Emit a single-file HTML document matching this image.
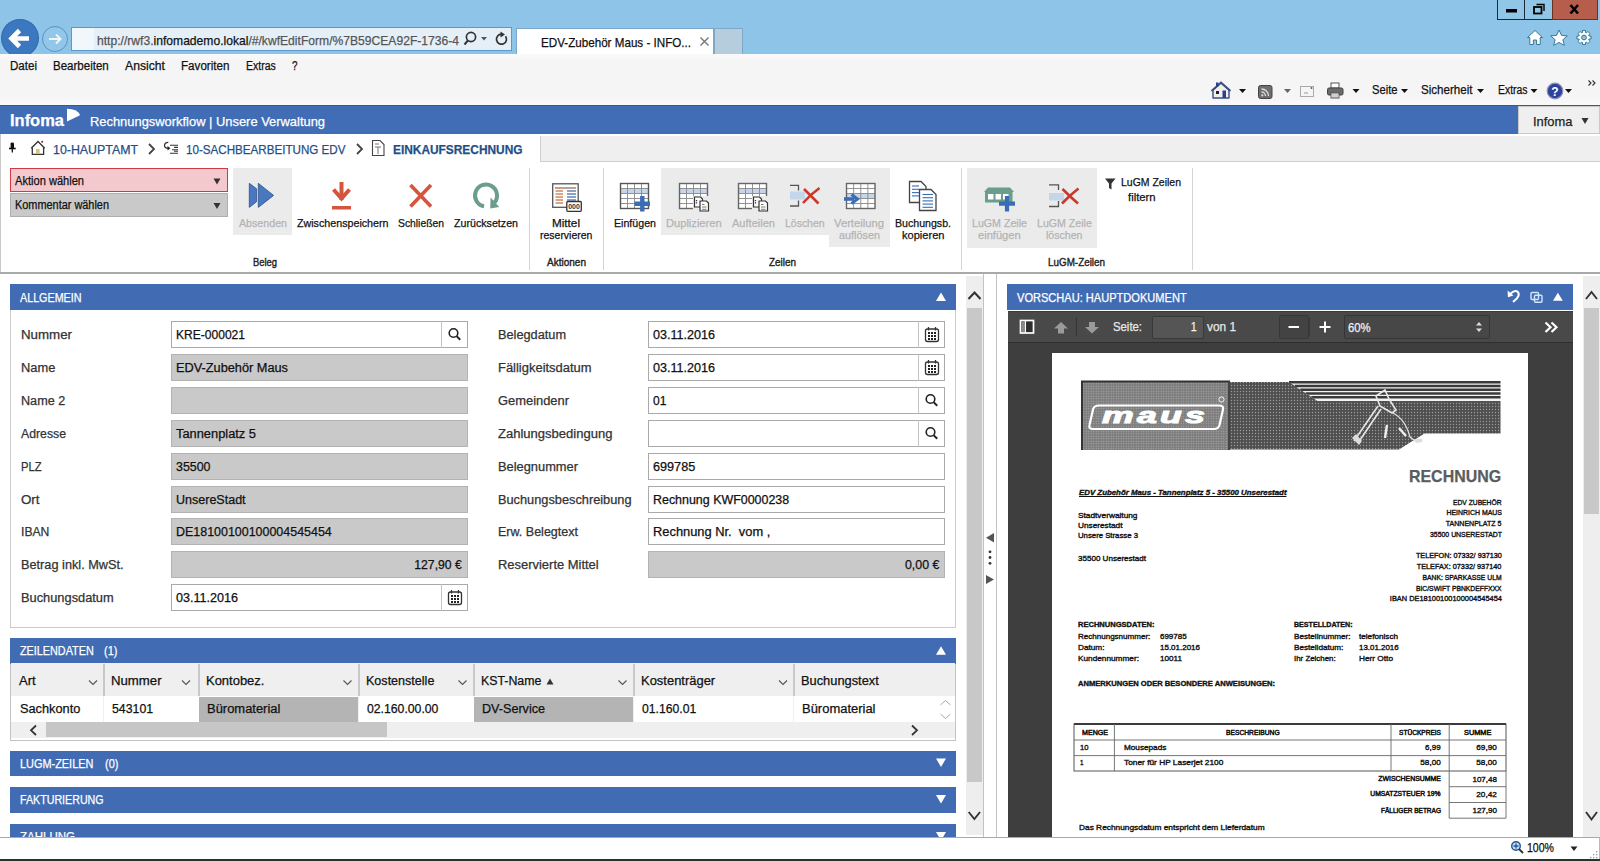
<!DOCTYPE html>
<html><head><meta charset="utf-8">
<style>
*{margin:0;padding:0;box-sizing:border-box}
html,body{width:1600px;height:861px;overflow:hidden;background:#fff;font-family:"Liberation Sans",sans-serif;color:#222;position:relative}
.a{position:absolute}
.t{position:absolute;white-space:nowrap;line-height:1;-webkit-text-stroke:0.25px currentColor}
svg{position:absolute;overflow:visible}
svg text{font-family:"Liberation Sans",sans-serif}
</style></head><body>
<div class="a" style="left:0px;top:0px;width:1600px;height:54px;background:#8dc4e7;"></div>
<div class="a" style="left:2px;top:20px;width:36px;height:36px;background:#3b78c0;border-radius:50%;box-shadow:0 0 0 1px #3169ad;"></div>
<svg style="left:0px;top:0px;" width="80" height="60" viewBox="0 0 80 60"><path d="M12.5 38.5 H29 M19.5 30.5 L11.5 38.5 L19.5 46.5" stroke="#fff" stroke-width="4.6" fill="none"></path><circle cx="55" cy="39" r="12.5" stroke="#5a93c4" stroke-width="1" fill="#92c7e9"></circle><path d="M49 39 H60.5 M56 34.5 L60.5 39 L56 43.5" stroke="#eef6fc" stroke-width="2" fill="none"></path></svg>
<div class="a" style="left:71px;top:27px;width:441px;height:24px;background:#e4eff8;border:1px solid #5f98c8;"></div>
<div class="a" style="left:72px;top:28px;width:22px;height:22px;background:#f2f7fb;"></div>
<div class="t" style="left: 96.5px; top: 33.5px; font-size: 13px; color: rgb(85, 85, 85); transform-origin: 0px 0px; transform: scaleX(0.9312);">http://rwf3.<span style="color:#111">infomademo.lokal</span>/#/kwfEditForm/%7B59CEA92F-1736-4</div>
<svg style="left:460px;top:28px;" width="52" height="24" viewBox="0 0 52 24"><circle cx="11" cy="9" r="4.6" stroke="#333" stroke-width="1.7" fill="none"></circle><path d="M8 12.3 L4.5 16.5" stroke="#333" stroke-width="2"></path><path d="M21 9 L27 9 L24 12.5 Z" fill="#555"></path><path d="M45.5 8.2 A5 5 0 1 1 41.5 6.2" stroke="#333" stroke-width="1.7" fill="none"></path><path d="M40.5 3.5 L45 6.5 L40.5 9.5 Z" fill="#333"></path></svg>
<div class="a" style="left:516px;top:28px;width:198px;height:27px;background:#fff;border:1px solid #78a6cc;border-bottom:none;"></div>
<div class="t" style="left: 541px; top: 36px; font-size: 13px; color: rgb(17, 17, 17); transform-origin: 0px 0px; transform: scaleX(0.8949);">EDV-Zubehör Maus - INFO...</div>
<svg style="left:698px;top:31.5px;" width="16" height="20" viewBox="0 0 16 20"><path d="M2.5 5.5 L10.5 13.5 M10.5 5.5 L2.5 13.5" stroke="#777" stroke-width="1.4"></path></svg>
<div class="a" style="left:714px;top:28px;width:29px;height:27px;background:#b5cddd;border:1px solid #7fa8c6;"></div>
<div class="a" style="left:1497px;top:-1px;width:28px;height:21px;background:#91c6e7;border:1px solid #1d2b38;"></div>
<div class="a" style="left:1524px;top:-1px;width:29px;height:21px;background:#91c6e7;border:1px solid #1d2b38;"></div>
<div class="a" style="left:1552px;top:-1px;width:46px;height:21px;background:#b65d4c;border:1px solid #6a3024;"></div>
<svg style="left:1490px;top:0px;" width="110" height="24" viewBox="0 0 110 24"><rect x="16" y="9" width="11" height="3.5" fill="#000"></rect><rect x="44" y="7" width="7.5" height="6.5" stroke="#000" stroke-width="1.8" fill="none"></rect><path d="M46.5 4.5 H54 V11" stroke="#000" stroke-width="1.4" fill="none"></path><path d="M80.5 5 L88 13.5 M88 5 L80.5 13.5" stroke="#000" stroke-width="2.6"></path></svg>
<svg style="left:1520px;top:26px;" width="80" height="24" viewBox="0 0 80 24"><path d="M15 4.5 L7.5 11.5 H9.8 V18.5 H13.4 V14 H16.6 V18.5 H20.2 V11.5 H22.5 Z" fill="#fff" stroke="#2b6d8c" stroke-width="0.9" stroke-linejoin="round"></path><path d="M39 4 L41.5 9.4 L47.3 9.9 L42.9 13.7 L44.3 19.4 L39 16.4 L33.7 19.4 L35.1 13.7 L30.7 9.9 L36.5 9.4 Z" fill="#fff" stroke="#2b6d8c" stroke-width="0.9" stroke-linejoin="round"></path><path d="M69.09 10.04 L71.04 10.00 L71.04 13.00 L69.09 12.96 L68.64 14.07 L70.04 15.42 L67.92 17.54 L66.57 16.14 L65.46 16.59 L65.50 18.54 L62.50 18.54 L62.54 16.59 L61.43 16.14 L60.08 17.54 L57.96 15.42 L59.36 14.07 L58.91 12.96 L56.96 13.00 L56.96 10.00 L58.91 10.04 L59.36 8.93 L57.96 7.58 L60.08 5.46 L61.43 6.86 L62.54 6.41 L62.50 4.46 L65.50 4.46 L65.46 6.41 L66.57 6.86 L67.92 5.46 L70.04 7.58 L68.64 8.93 Z" fill="#fff" stroke="#2b6d8c" stroke-width="0.9" stroke-linejoin="round"></path><circle cx="64" cy="11.5" r="2.4" fill="#8dc4e7" stroke="#2b6d8c" stroke-width="0.9"></circle></svg>
<div class="a" style="left:0px;top:54px;width:1600px;height:51px;background:linear-gradient(#fbfafa 0px,#f6f5f5 6px,#f6f5f5 44px,#fbfafa 51px);"></div>
<div class="t" style="left: 10px; top: 59.62px; font-size: 12.5px; color: rgb(17, 17, 17); transform-origin: 0px 0px; transform: scaleX(0.9251);">Datei</div>
<div class="t" style="left: 53px; top: 59.62px; font-size: 12.5px; color: rgb(17, 17, 17); transform-origin: 0px 0px; transform: scaleX(0.922);">Bearbeiten</div>
<div class="t" style="left: 125px; top: 59.62px; font-size: 12.5px; color: rgb(17, 17, 17); transform-origin: 0px 0px; transform: scaleX(0.9756);">Ansicht</div>
<div class="t" style="left: 181px; top: 59.62px; font-size: 12.5px; color: rgb(17, 17, 17); transform-origin: 0px 0px; transform: scaleX(0.9307);">Favoriten</div>
<div class="t" style="left: 246px; top: 59.62px; font-size: 12.5px; color: rgb(17, 17, 17); transform-origin: 0px 0px; transform: scaleX(0.8395);">Extras</div>
<div class="t" style="left: 292px; top: 59.62px; font-size: 12.5px; color: rgb(17, 17, 17); transform-origin: 0px 0px; transform: scaleX(0.791);">?</div>
<svg style="left:1205px;top:78px;" width="395" height="26" viewBox="0 0 395 26"><path d="M16 5 L8 12 V20 H24 V12 Z" fill="#f4f0e6" stroke="#3b4f8c" stroke-width="1.4" stroke-linejoin="round"></path><path d="M6.5 13 L16 4.5 L25.5 13" stroke="#3b4f8c" stroke-width="2" fill="none"></path><rect x="11" y="4.5" width="2.4" height="4" fill="#2b3f8a"></rect><rect x="11" y="13" width="3" height="3" fill="#223"></rect><rect x="17.5" y="12.5" width="3.5" height="7.5" fill="#2a3f9a"></rect><path d="M34 11 L41 11 L37.5 15 Z" fill="#111"></path><rect x="53.5" y="7.5" width="13.5" height="13" rx="2" fill="#6e6e6e" stroke="#444" stroke-width="1"></rect><path d="M56.5 11 A7 7 0 0 1 63.5 18 M56.5 14 A4 4 0 0 1 60.5 18" stroke="#ddd" stroke-width="1.3" fill="none"></path><circle cx="57.3" cy="17.3" r="1.1" fill="#ddd"></circle><path d="M79 11 L86 11 L82.5 15 Z" fill="#666"></path><rect x="95.5" y="8.5" width="13" height="10" fill="#f5f5f5" stroke="#aaa" stroke-width="1"></rect><path d="M99 15 H103" stroke="#999" stroke-width="1"></path><circle cx="106.5" cy="10" r="1" fill="#c33"></circle><rect x="126" y="5" width="8" height="5" fill="#fff" stroke="#555" stroke-width="1"></rect><rect x="122.5" y="10" width="15.5" height="7" rx="1.5" fill="#6a6a6a" stroke="#444" stroke-width="1"></rect><rect x="126" y="15" width="8" height="5" fill="#fff" stroke="#555" stroke-width="1"></rect><path d="M127 17 H133 M127 19 H133" stroke="#777" stroke-width="0.7"></path><path d="M147.5 11 L154.5 11 L151 15 Z" fill="#111"></path><path d="M196 11 L203 11 L199.5 15 Z" fill="#111"></path><path d="M272 11 L279 11 L275.5 15 Z" fill="#111"></path><path d="M325.5 11 L332.5 11 L329 15 Z" fill="#111"></path><circle cx="350" cy="13" r="7.8" fill="#2e429c" stroke="#8a96b8" stroke-width="1.2"></circle><text x="350" y="17.6" font-family="Liberation Sans" font-weight="bold" font-size="12" fill="#fff" text-anchor="middle">?</text><path d="M360 11 L367 11 L363.5 15 Z" fill="#111"></path><path d="M383.5 2.5 L386 5 L383.5 7.5 M387.5 2.5 L390 5 L387.5 7.5" stroke="#333" stroke-width="1.1" fill="none"></path></svg>
<div class="t" style="left: 1372px; top: 84.02px; font-size: 12.5px; color: rgb(17, 17, 17); transform-origin: 0px 0px; transform: scaleX(0.8947);">Seite</div>
<div class="t" style="left: 1421px; top: 84.02px; font-size: 12.5px; color: rgb(17, 17, 17); transform-origin: 0px 0px; transform: scaleX(0.9264);">Sicherheit</div>
<div class="t" style="left: 1497.5px; top: 84.02px; font-size: 12.5px; color: rgb(17, 17, 17); transform-origin: 0px 0px; transform: scaleX(0.8325);">Extras</div>
<div class="a" style="left:0px;top:105px;width:1600px;height:29px;background:#406db5;"></div>
<div class="a" style="left:0px;top:105px;width:1600px;height:1px;background:#30589a;"></div>
<div class="t" style="left: 10px; top: 112.41px; font-size: 17px; color: rgb(255, 255, 255); font-weight: bold; transform-origin: 0px 0px; transform: scaleX(0.9689);">Infoma</div>
<svg style="left:60px;top:104px;" width="30" height="22" viewBox="0 0 30 22"><path d="M7 4.7 Q18 5 20 11.25 L7 17.5 Z" fill="#fff"></path></svg>
<div class="t" style="left: 90px; top: 115.2px; font-size: 13px; color: rgb(255, 255, 255); transform-origin: 0px 0px; transform: scaleX(0.9925);">Rechnungsworkflow | Unsere Verwaltung</div>
<div class="a" style="left:1518px;top:106px;width:82px;height:28px;background:#efefef;border:1px solid #c9c9c9;"></div>
<div class="t" style="left: 1533px; top: 114.5px; font-size: 13px; color: rgb(34, 34, 34); transform-origin: 0px 0px; transform: scaleX(0.9937);">Infoma</div>
<svg style="left:1578px;top:113px;" width="14" height="14" viewBox="0 0 14 14"><path d="M3.5 5 L10.5 5 L7 11 Z" fill="#333"></path></svg>
<div class="a" style="left:540px;top:136px;width:1060px;height:26px;background:#efefef;border-left:1px solid #cfcfcf;border-bottom:1px solid #cfcfcf;"></div>
<div class="a" style="left:0px;top:134px;width:1px;height:140px;background:#c8c8c8;"></div>
<svg style="left:0px;top:134px;" width="540" height="30" viewBox="0 0 540 30"><path d="M10.6 14 V9.5 Q10.6 8.6 12.3 8.6 Q14 8.6 14 9.5 V14 Z" fill="#111"></path><path d="M9 14.5 H15.7" stroke="#111" stroke-width="1.6"></path><path d="M12.3 14.5 V18.5" stroke="#111" stroke-width="1.3"></path><path d="M31.2 14.3 L38 7.5 L44.7 14.3" stroke="#333" stroke-width="1.3" fill="none"></path><path d="M32.3 13.5 V20.4 H43.6 V13.5" stroke="#333" stroke-width="1.3" fill="none"></path><rect x="36" y="15" width="3.6" height="5" fill="#d9c27a"></rect><circle cx="42.2" cy="7.8" r="1" fill="#8a1a2a"></circle><path d="M149 10 L154 15 L149 20" stroke="#444" stroke-width="1.8" fill="none"></path><path d="M168.3 8.3 Q164.5 8.3 164.5 11.5 Q164.5 14.3 168.5 14.3" stroke="#333" stroke-width="1.3" fill="none"></path><path d="M167.5 12 L170.5 14.3 L167.5 16.5 Z" fill="#223"></path><path d="M170 11.3 H178 M174 13.4 H178 M172 15.7 H178 M174 17.3 H178 M170 19.3 H178" stroke="#333" stroke-width="1.1"></path><path d="M357 10 L362 15 L357 20" stroke="#444" stroke-width="1.8" fill="none"></path><path d="M372.5 6.5 H380 L384 10.5 V21.5 H372.5 Z" fill="#fff" stroke="#444" stroke-width="1.1"></path><path d="M375 10 H379 M375 13 H381 M378 13 V20" stroke="#666" stroke-width="0.9"></path></svg>
<div class="t" style="left: 52.5px; top: 143px; font-size: 13px; color: rgb(30, 80, 136); transform-origin: 0px 0px; transform: scaleX(0.9515);">10-HAUPTAMT</div>
<div class="t" style="left: 186px; top: 143px; font-size: 13px; color: rgb(30, 80, 136); transform-origin: 0px 0px; transform: scaleX(0.8939);">10-SACHBEARBEITUNG EDV</div>
<div class="t" style="left: 392.5px; top: 143px; font-size: 13px; color: rgb(30, 80, 136); font-weight: bold; transform-origin: 0px 0px; transform: scaleX(0.9148);">EINKAUFSRECHNUNG</div>
<div class="a" style="left:0px;top:272px;width:1600px;height:2px;background:#a9a9a9;height:1.5px;"></div>
<div class="a" style="left:529px;top:168px;width:1px;height:102px;background:#d4d4d4;"></div>
<div class="a" style="left:603px;top:168px;width:1px;height:102px;background:#d4d4d4;"></div>
<div class="a" style="left:961px;top:168px;width:1px;height:102px;background:#d4d4d4;"></div>
<div class="a" style="left:1192px;top:168px;width:1px;height:102px;background:#d4d4d4;"></div>
<div class="a" style="left:10px;top:168px;width:218px;height:24px;background:#f3c9cd;border:1px solid #d03a44;"></div>
<div class="t" style="left: 14.5px; top: 175.04px; font-size: 12px; color: rgb(17, 17, 17); transform-origin: 0px 0px; transform: scaleX(0.9235);">Aktion wählen</div>
<div class="a" style="left:10px;top:193px;width:218px;height:24px;background:#c9c9c9;border:1px solid #aeaeae;"></div>
<div class="t" style="left: 14.5px; top: 199.04px; font-size: 12px; color: rgb(17, 17, 17); transform-origin: 0px 0px; transform: scaleX(0.9092);">Kommentar wählen</div>
<svg style="left:205px;top:170px;" width="25" height="45" viewBox="0 0 25 45"><path d="M8.5 8.5 L15.5 8.5 L12 14.5 Z" fill="#333"></path><path d="M8.5 33 L15.5 33 L12 39 Z" fill="#333"></path></svg>
<div class="a" style="left:233px;top:168px;width:59px;height:67px;background:#ebebeb;"></div>
<div class="a" style="left:661px;top:168px;width:229px;height:67px;background:#ebebeb;"></div>
<div class="a" style="left:829px;top:168px;width:61px;height:79px;background:#ebebeb;"></div>
<div class="a" style="left:967px;top:168px;width:130px;height:80px;background:#ebebeb;"></div>
<svg style="left:0px;top:0px;" width="1600" height="280" viewBox="0 0 1600 280"><path d="M249.3 183.3 L256.6 188.8 V201.7 L249.3 207.4 Z" fill="#4a78c0" stroke="#2c4f8a" stroke-width="0.8" stroke-linejoin="round"></path><path d="M258.3 183.3 L273.6 195.4 L258.3 207.4 Z" fill="#4a78c0" stroke="#2c4f8a" stroke-width="0.8" stroke-linejoin="round"></path><path d="M341.5 182 V200" stroke="#d2553c" stroke-width="4"></path><path d="M333.5 189.5 L341.5 198.5 L349.5 189.5" stroke="#d2553c" stroke-width="4" fill="none"></path><rect x="332" y="206" width="19" height="3.5" fill="#d2553c"></rect><path d="M410.5 185 L431 206.5 M431 185 L410.5 206.5" stroke="#d6553f" stroke-width="3.6"></path><path d="M484.1 206.4 A11 11 0 1 1 494.4 202.7" stroke="#6a9e8b" stroke-width="4" fill="none"></path><path d="M490.6 197.5 L490.2 208.5 L499.2 207 Z" fill="#6a9e8b"></path><rect x="552.7" y="183.8" width="25.5" height="23.5" fill="#fff" stroke="#555" stroke-width="1.3"></rect><path d="M555 188 H576" stroke="#b08a7a" stroke-width="1.6"></path><path d="M555.5 191 H563" stroke="#d0906a" stroke-width="1.6"></path><path d="M567 191 H576" stroke="#6a8cc0" stroke-width="1.6"></path><path d="M555.5 194 H563" stroke="#d0906a" stroke-width="1.6"></path><path d="M567 194 H576" stroke="#6a8cc0" stroke-width="1.6"></path><path d="M555.5 197 H563" stroke="#d0906a" stroke-width="1.6"></path><path d="M567 197 H576" stroke="#6a8cc0" stroke-width="1.6"></path><path d="M555.5 200 H563" stroke="#d0906a" stroke-width="1.6"></path><path d="M567 200 H576" stroke="#6a8cc0" stroke-width="1.6"></path><path d="M555.5 203 H563" stroke="#d0906a" stroke-width="1.6"></path><path d="M567 203 H576" stroke="#6a8cc0" stroke-width="1.6"></path><rect x="566.8" y="201.5" width="14.5" height="9.8" rx="1" fill="#fff" stroke="#333" stroke-width="1.3"></rect><text x="574" y="209.3" font-size="7" font-weight="bold" fill="#333" text-anchor="middle">000</text><rect x="620.5" y="183.5" width="28" height="25" fill="#fff"></rect><rect x="620.5" y="188.5" width="28" height="5.0" fill="#c5d5ea"></rect><path d="M620.5 188.50 H648.5" stroke="#888" stroke-width="0.9"></path><path d="M620.5 193.50 H648.5" stroke="#888" stroke-width="0.9"></path><path d="M620.5 198.50 H648.5" stroke="#888" stroke-width="0.9"></path><path d="M620.5 203.50 H648.5" stroke="#888" stroke-width="0.9"></path><path d="M627.50 183.5 V208.5" stroke="#888" stroke-width="0.9"></path><path d="M634.50 183.5 V208.5" stroke="#888" stroke-width="0.9"></path><path d="M641.50 183.5 V208.5" stroke="#888" stroke-width="0.9"></path><rect x="620.5" y="183.5" width="28" height="25" fill="none" stroke="#555" stroke-width="1.4"></rect><path d="M634.5 203.8 H650 M642.3 196 V211.5" stroke="#3a6db5" stroke-width="4.4"></path><rect x="679.5" y="183.5" width="28" height="25" fill="#fff"></rect><rect x="679.5" y="188.5" width="28" height="5.0" fill="#c5d5ea"></rect><path d="M679.5 188.50 H707.5" stroke="#888" stroke-width="0.9"></path><path d="M679.5 193.50 H707.5" stroke="#888" stroke-width="0.9"></path><path d="M679.5 198.50 H707.5" stroke="#888" stroke-width="0.9"></path><path d="M679.5 203.50 H707.5" stroke="#888" stroke-width="0.9"></path><path d="M686.50 183.5 V208.5" stroke="#888" stroke-width="0.9"></path><path d="M693.50 183.5 V208.5" stroke="#888" stroke-width="0.9"></path><path d="M700.50 183.5 V208.5" stroke="#888" stroke-width="0.9"></path><rect x="679.5" y="183.5" width="28" height="25" fill="none" stroke="#666" stroke-width="1.4"></rect><rect x="693" y="196" width="16" height="16" fill="#ebebeb"></rect><path d="M694.5 197 H700.5 L702.5 199 V207 H694.5 Z" fill="#fff" stroke="#333" stroke-width="1.2"></path><path d="M696.5 200 V204" stroke="#333" stroke-width="1.3" stroke-dasharray="1.2 1"></path><path d="M700.0 201 H706.5 L708.5 203 V211 H700.0 Z" fill="#fff" stroke="#333" stroke-width="1.2"></path><path d="M702.0 204.5 H704.5 M702.0 207 H706.5 M702.0 209.3 H706.5" stroke="#444" stroke-width="0.7"></path><rect x="738.5" y="183.5" width="28" height="25" fill="#fff"></rect><rect x="738.5" y="188.5" width="28" height="5.0" fill="#c5d5ea"></rect><path d="M738.5 188.50 H766.5" stroke="#888" stroke-width="0.9"></path><path d="M738.5 193.50 H766.5" stroke="#888" stroke-width="0.9"></path><path d="M738.5 198.50 H766.5" stroke="#888" stroke-width="0.9"></path><path d="M738.5 203.50 H766.5" stroke="#888" stroke-width="0.9"></path><path d="M745.50 183.5 V208.5" stroke="#888" stroke-width="0.9"></path><path d="M752.50 183.5 V208.5" stroke="#888" stroke-width="0.9"></path><path d="M759.50 183.5 V208.5" stroke="#888" stroke-width="0.9"></path><rect x="738.5" y="183.5" width="28" height="25" fill="none" stroke="#666" stroke-width="1.4"></rect><rect x="752" y="196" width="17" height="16" fill="#ebebeb"></rect><path d="M753.5 197 H759.5 L761.5 199 V207 H753.5 Z" fill="#fff" stroke="#333" stroke-width="1.2"></path><path d="M755.5 200 V204" stroke="#333" stroke-width="1.3" stroke-dasharray="1.2 1"></path><path d="M759.0 201 H765.5 L767.5 203 V211 H759.0 Z" fill="#fff" stroke="#333" stroke-width="1.2"></path><path d="M761.0 204.5 H763.5 M761.0 207 H765.5 M761.0 209.3 H765.5" stroke="#444" stroke-width="0.7"></path><path d="M790 185.3 H798.5 V190.5 M798.5 200.5 V206 H790" stroke="#555" stroke-width="1.3" fill="none"></path><rect x="790" y="191.5" width="15" height="8" fill="#c5d5ea"></rect><path d="M803 203 Q811 194 819.5 188 M804 189 Q812 197 818.5 203.5" stroke="#c8382c" stroke-width="2.6" fill="none"></path><rect x="846.5" y="183.5" width="28.5" height="25" fill="#fff"></rect><rect x="846.5" y="193.5" width="28.5" height="5.0" fill="#c5d5ea"></rect><path d="M846.5 188.50 H875.0" stroke="#888" stroke-width="0.9"></path><path d="M846.5 193.50 H875.0" stroke="#888" stroke-width="0.9"></path><path d="M846.5 198.50 H875.0" stroke="#888" stroke-width="0.9"></path><path d="M846.5 203.50 H875.0" stroke="#888" stroke-width="0.9"></path><path d="M853.62 183.5 V208.5" stroke="#888" stroke-width="0.9"></path><path d="M860.75 183.5 V208.5" stroke="#888" stroke-width="0.9"></path><path d="M867.88 183.5 V208.5" stroke="#888" stroke-width="0.9"></path><rect x="846.5" y="183.5" width="28.5" height="25" fill="none" stroke="#666" stroke-width="1.4"></rect><path d="M844 199 H854" stroke="#3a6db5" stroke-width="3.6"></path><path d="M851.5 194.5 L857.5 199 L851.5 203.5" stroke="#3a6db5" stroke-width="3" fill="none"></path><path d="M909.5 181.5 H921 L926 186.5 V202.5 H909.5 Z" fill="#fff" stroke="#444" stroke-width="1.3"></path><path d="M912 186.0 H919" stroke="#3a6db5" stroke-width="1.1"></path><path d="M912 189.3 H919" stroke="#3a6db5" stroke-width="1.1"></path><path d="M912 192.6 H919" stroke="#3a6db5" stroke-width="1.1"></path><path d="M912 195.9 H919" stroke="#3a6db5" stroke-width="1.1"></path><path d="M919.5 189.5 H931 L936 194.5 V210.5 H919.5 Z" fill="#fff" stroke="#444" stroke-width="1.3"></path><path d="M922.5 194.5 H933" stroke="#3a6db5" stroke-width="1.1"></path><path d="M922.5 197.7 H933" stroke="#3a6db5" stroke-width="1.1"></path><path d="M922.5 200.9 H933" stroke="#3a6db5" stroke-width="1.1"></path><path d="M922.5 204.1 H933" stroke="#3a6db5" stroke-width="1.1"></path><path d="M922.5 207.3 H933" stroke="#3a6db5" stroke-width="1.1"></path><path d="M984 192 L988 187.5 H1010 L1014 192 Z" fill="#6a9e8a"></path><rect x="985" y="191.5" width="27.5" height="11" fill="#6a9e8a"></rect><rect x="988" y="194" width="5.5" height="5.5" fill="#fff"></rect><rect x="995.5" y="194" width="5.5" height="5.5" fill="#fff"></rect><rect x="1003" y="194" width="5.5" height="5.5" fill="#fff"></rect><path d="M999 203.6 H1015 M1007 196 V211.5" stroke="#3a6db5" stroke-width="4.2"></path><path d="M1049 184.8 H1058.5 V190 M1058.5 201 V206.5 H1049" stroke="#555" stroke-width="1.3" fill="none"></path><rect x="1049" y="193" width="15" height="7.5" fill="#c5d5ea"></rect><path d="M1062 203.5 Q1070 195 1078.5 188.5 M1062.5 189 Q1070.5 197 1078 203.5" stroke="#c8382c" stroke-width="2.6" fill="none"></path><path d="M1105 178.5 H1115.5 L1111.5 183.5 V189.5 L1109 188 V183.5 Z" fill="#333"></path></svg>
<div class="t" style="left: 238.5px; top: 218.47px; font-size: 11.5px; color: rgb(179, 179, 179); transform-origin: 0px 0px; transform: scaleX(0.9267);">Absenden</div>
<div class="t" style="left: 296.5px; top: 218.47px; font-size: 11.5px; color: rgb(17, 17, 17); transform-origin: 0px 0px; transform: scaleX(0.9295);">Zwischenspeichern</div>
<div class="t" style="left: 398px; top: 218.47px; font-size: 11.5px; color: rgb(17, 17, 17); transform-origin: 0px 0px; transform: scaleX(0.8995);">Schließen</div>
<div class="t" style="left: 454px; top: 218.47px; font-size: 11.5px; color: rgb(17, 17, 17); transform-origin: 0px 0px; transform: scaleX(0.9271);">Zurücksetzen</div>
<div class="t" style="left: 552px; top: 218.47px; font-size: 11.5px; color: rgb(17, 17, 17); transform-origin: 0px 0px; transform: scaleX(1.0188);">Mittel</div>
<div class="t" style="left: 539.6px; top: 230.27px; font-size: 11.5px; color: rgb(17, 17, 17); transform-origin: 0px 0px; transform: scaleX(0.9108);">reservieren</div>
<div class="t" style="left: 614px; top: 218.47px; font-size: 11.5px; color: rgb(17, 17, 17); transform-origin: 0px 0px; transform: scaleX(0.925);">Einfügen</div>
<div class="t" style="left: 666px; top: 218.47px; font-size: 11.5px; color: rgb(179, 179, 179); transform-origin: 0px 0px; transform: scaleX(0.9664);">Duplizieren</div>
<div class="t" style="left: 731.6px; top: 218.47px; font-size: 11.5px; color: rgb(179, 179, 179); transform-origin: 0px 0px; transform: scaleX(0.9606);">Aufteilen</div>
<div class="t" style="left: 785px; top: 218.47px; font-size: 11.5px; color: rgb(179, 179, 179); transform-origin: 0px 0px; transform: scaleX(0.9107);">Löschen</div>
<div class="t" style="left: 834px; top: 218.47px; font-size: 11.5px; color: rgb(179, 179, 179); transform-origin: 0px 0px; transform: scaleX(0.9774);">Verteilung</div>
<div class="t" style="left: 839px; top: 230.27px; font-size: 11.5px; color: rgb(179, 179, 179); transform-origin: 0px 0px; transform: scaleX(0.9429);">auflösen</div>
<div class="t" style="left: 895px; top: 218.47px; font-size: 11.5px; color: rgb(17, 17, 17); transform-origin: 0px 0px; transform: scaleX(0.9218);">Buchungsb.</div>
<div class="t" style="left: 901.5px; top: 230.27px; font-size: 11.5px; color: rgb(17, 17, 17); transform-origin: 0px 0px; transform: scaleX(0.9632);">kopieren</div>
<div class="t" style="left: 972px; top: 218.47px; font-size: 11.5px; color: rgb(179, 179, 179); transform-origin: 0px 0px; transform: scaleX(0.9253);">LuGM Zeile</div>
<div class="t" style="left: 977.6px; top: 230.27px; font-size: 11.5px; color: rgb(179, 179, 179); transform-origin: 0px 0px; transform: scaleX(0.9654);">einfügen</div>
<div class="t" style="left: 1037.4px; top: 218.47px; font-size: 11.5px; color: rgb(179, 179, 179); transform-origin: 0px 0px; transform: scaleX(0.922);">LuGM Zeile</div>
<div class="t" style="left: 1045.9px; top: 230.27px; font-size: 11.5px; color: rgb(179, 179, 179); transform-origin: 0px 0px; transform: scaleX(0.9208);">löschen</div>
<div class="t" style="left: 1121.4px; top: 176.77px; font-size: 11.5px; color: rgb(17, 17, 17); transform-origin: 0px 0px; transform: scaleX(0.9112);">LuGM Zeilen</div>
<div class="t" style="left: 1128px; top: 192.27px; font-size: 11.5px; color: rgb(17, 17, 17); transform-origin: 0px 0px; transform: scaleX(0.9813);">filtern</div>
<div class="t" style="left: 252.7px; top: 256.99px; font-size: 11px; color: rgb(34, 34, 34); -webkit-text-stroke: 0.4px rgb(34, 34, 34); transform-origin: 0px 0px; transform: scaleX(0.8529);">Beleg</div>
<div class="t" style="left: 546.6px; top: 256.99px; font-size: 11px; color: rgb(34, 34, 34); -webkit-text-stroke: 0.4px rgb(34, 34, 34); transform-origin: 0px 0px; transform: scaleX(0.9109);">Aktionen</div>
<div class="t" style="left: 768.8px; top: 256.99px; font-size: 11px; color: rgb(34, 34, 34); -webkit-text-stroke: 0.4px rgb(34, 34, 34); transform-origin: 0px 0px; transform: scaleX(0.9009);">Zeilen</div>
<div class="t" style="left: 1048px; top: 256.99px; font-size: 11px; color: rgb(34, 34, 34); -webkit-text-stroke: 0.4px rgb(34, 34, 34); transform-origin: 0px 0px; transform: scaleX(0.8965);">LuGM-Zeilen</div>
<div class="a" style="left:10px;top:284px;width:946px;height:344px;background:#fff;border:1px solid #cbcbcb;border-top:none;"></div>
<div class="a" style="left:10px;top:284px;width:946px;height:26px;background:#416cb4;"></div>
<div class="t" style="left: 20.3px; top: 291.64px; font-size: 12px; color: rgb(255, 255, 255); transform-origin: 0px 0px; transform: scaleX(0.8952);">ALLGEMEIN</div>
<div class="t" style="left: 21px; top: 329.34px; font-size: 12px; color: rgb(51, 51, 51); transform-origin: 0px 0px; transform: scaleX(1.1083);">Nummer</div>
<div class="t" style="left: 21px; top: 362.34px; font-size: 12px; color: rgb(51, 51, 51); transform-origin: 0px 0px; transform: scaleX(1.0714);">Name</div>
<div class="t" style="left: 21px; top: 395.34px; font-size: 12px; color: rgb(51, 51, 51); transform-origin: 0px 0px; transform: scaleX(1.0516);">Name 2</div>
<div class="t" style="left: 21px; top: 428.34px; font-size: 12px; color: rgb(51, 51, 51); transform-origin: 0px 0px; transform: scaleX(1.022);">Adresse</div>
<div class="t" style="left: 21px; top: 461.34px; font-size: 12px; color: rgb(51, 51, 51); transform-origin: 0px 0px; transform: scaleX(0.9312);">PLZ</div>
<div class="t" style="left: 21px; top: 494.34px; font-size: 12px; color: rgb(51, 51, 51); transform-origin: 0px 0px; transform: scaleX(1.1097);">Ort</div>
<div class="t" style="left: 21px; top: 526.34px; font-size: 12px; color: rgb(51, 51, 51); transform-origin: 0px 0px; transform: scaleX(1.0137);">IBAN</div>
<div class="t" style="left: 21px; top: 559.34px; font-size: 12px; color: rgb(51, 51, 51); transform-origin: 0px 0px; transform: scaleX(1.061);">Betrag inkl. MwSt.</div>
<div class="t" style="left: 21px; top: 592.34px; font-size: 12px; color: rgb(51, 51, 51); transform-origin: 0px 0px; transform: scaleX(1.0688);">Buchungsdatum</div>
<div class="t" style="left: 498px; top: 329.34px; font-size: 12px; color: rgb(51, 51, 51); transform-origin: 0px 0px; transform: scaleX(1.0617);">Belegdatum</div>
<div class="t" style="left: 498px; top: 362.34px; font-size: 12px; color: rgb(51, 51, 51); transform-origin: 0px 0px; transform: scaleX(1.0795);">Fälligkeitsdatum</div>
<div class="t" style="left: 498px; top: 395.34px; font-size: 12px; color: rgb(51, 51, 51); transform-origin: 0px 0px; transform: scaleX(1.075);">Gemeindenr</div>
<div class="t" style="left: 498px; top: 428.34px; font-size: 12px; color: rgb(51, 51, 51); transform-origin: 0px 0px; transform: scaleX(1.0861);">Zahlungsbedingung</div>
<div class="t" style="left: 498px; top: 461.34px; font-size: 12px; color: rgb(51, 51, 51); transform-origin: 0px 0px; transform: scaleX(1.0709);">Belegnummer</div>
<div class="t" style="left: 498px; top: 494.34px; font-size: 12px; color: rgb(51, 51, 51); transform-origin: 0px 0px; transform: scaleX(1.0643);">Buchungsbeschreibung</div>
<div class="t" style="left: 498px; top: 526.34px; font-size: 12px; color: rgb(51, 51, 51); transform-origin: 0px 0px; transform: scaleX(1.0428);">Erw. Belegtext</div>
<div class="t" style="left: 498px; top: 559.34px; font-size: 12px; color: rgb(51, 51, 51); transform-origin: 0px 0px; transform: scaleX(1.0786);">Reservierte Mittel</div>
<div class="a" style="left:171px;top:321px;width:297px;height:27px;background:#fff;border:1px solid #aaa;"></div>
<div class="a" style="left:441px;top:321px;width:1px;height:27px;background:#c4c4c4;"></div>
<div class="t" style="left: 176px; top: 329.34px; font-size: 12px; color: rgb(17, 17, 17); transform-origin: 0px 0px; transform: scaleX(1.0041);">KRE-000021</div>
<div class="a" style="left:171px;top:354px;width:297px;height:27px;background:#c9c9c9;border:1px solid #b3b3b3;"></div>
<div class="t" style="left: 176px; top: 362.34px; font-size: 12px; color: rgb(17, 17, 17); transform-origin: 0px 0px; transform: scaleX(1.0627);">EDV-Zubehör Maus</div>
<div class="a" style="left:171px;top:387px;width:297px;height:27px;background:#c9c9c9;border:1px solid #b3b3b3;"></div>
<div class="a" style="left:171px;top:420px;width:297px;height:27px;background:#c9c9c9;border:1px solid #b3b3b3;"></div>
<div class="t" style="left: 176px; top: 428.34px; font-size: 12px; color: rgb(17, 17, 17); transform-origin: 0px 0px; transform: scaleX(1.0705);">Tannenplatz 5</div>
<div class="a" style="left:171px;top:453px;width:297px;height:27px;background:#c9c9c9;border:1px solid #b3b3b3;"></div>
<div class="t" style="left: 176px; top: 461.34px; font-size: 12px; color: rgb(17, 17, 17); transform-origin: 0px 0px; transform: scaleX(1.0337);">35500</div>
<div class="a" style="left:171px;top:486px;width:297px;height:27px;background:#c9c9c9;border:1px solid #b3b3b3;"></div>
<div class="t" style="left: 176px; top: 494.34px; font-size: 12px; color: rgb(17, 17, 17); transform-origin: 0px 0px; transform: scaleX(1.0434);">UnsereStadt</div>
<div class="a" style="left:171px;top:518px;width:297px;height:27px;background:#c9c9c9;border:1px solid #b3b3b3;"></div>
<div class="t" style="left: 176px; top: 526.34px; font-size: 12px; color: rgb(17, 17, 17); transform-origin: 0px 0px; transform: scaleX(1.0373);">DE18100100100004545454</div>
<div class="a" style="left:171px;top:551px;width:297px;height:27px;background:#c9c9c9;border:1px solid #b3b3b3;"></div>
<div class="t" style="left: 414.78px; top: 559.34px; font-size: 12px; color: rgb(17, 17, 17); transform-origin: 100% 0px; transform: scaleX(1.0146);">127,90 €</div>
<div class="a" style="left:171px;top:584px;width:297px;height:27px;background:#fff;border:1px solid #aaa;"></div>
<div class="a" style="left:441px;top:584px;width:1px;height:27px;background:#c4c4c4;"></div>
<div class="t" style="left: 176px; top: 592.34px; font-size: 12px; color: rgb(17, 17, 17); transform-origin: 0px 0px; transform: scaleX(1.0478);">03.11.2016</div>
<div class="a" style="left:648px;top:321px;width:297px;height:27px;background:#fff;border:1px solid #aaa;"></div>
<div class="a" style="left:918px;top:321px;width:1px;height:27px;background:#c4c4c4;"></div>
<div class="t" style="left: 653px; top: 329.34px; font-size: 12px; color: rgb(17, 17, 17); transform-origin: 0px 0px; transform: scaleX(1.0478);">03.11.2016</div>
<div class="a" style="left:648px;top:354px;width:297px;height:27px;background:#fff;border:1px solid #aaa;"></div>
<div class="a" style="left:918px;top:354px;width:1px;height:27px;background:#c4c4c4;"></div>
<div class="t" style="left: 653px; top: 362.34px; font-size: 12px; color: rgb(17, 17, 17); transform-origin: 0px 0px; transform: scaleX(1.0478);">03.11.2016</div>
<div class="a" style="left:648px;top:387px;width:297px;height:27px;background:#fff;border:1px solid #aaa;"></div>
<div class="a" style="left:918px;top:387px;width:1px;height:27px;background:#c4c4c4;"></div>
<div class="t" style="left: 653px; top: 395.34px; font-size: 12px; color: rgb(17, 17, 17); transform-origin: 0px 0px; transform: scaleX(1.003);">01</div>
<div class="a" style="left:648px;top:420px;width:297px;height:27px;background:#fff;border:1px solid #aaa;"></div>
<div class="a" style="left:918px;top:420px;width:1px;height:27px;background:#c4c4c4;"></div>
<div class="a" style="left:648px;top:453px;width:297px;height:27px;background:#fff;border:1px solid #aaa;"></div>
<div class="t" style="left: 653px; top: 461.34px; font-size: 12px; color: rgb(17, 17, 17); transform-origin: 0px 0px; transform: scaleX(1.0538);">699785</div>
<div class="a" style="left:648px;top:486px;width:297px;height:27px;background:#fff;border:1px solid #aaa;"></div>
<div class="t" style="left: 653px; top: 494.34px; font-size: 12px; color: rgb(17, 17, 17); transform-origin: 0px 0px; transform: scaleX(1.0364);">Rechnung KWF0000238</div>
<div class="a" style="left:648px;top:518px;width:297px;height:27px;background:#fff;border:1px solid #aaa;"></div>
<div class="t" style="left: 653px; top: 526.34px; font-size: 12px; color: rgb(17, 17, 17); transform-origin: 0px 0px; transform: scaleX(1.0723);">Rechnung Nr.&nbsp; vom ,</div>
<div class="a" style="left:648px;top:551px;width:297px;height:27px;background:#c9c9c9;border:1px solid #b3b3b3;"></div>
<div class="t" style="left: 905.63px; top: 559.34px; font-size: 12px; color: rgb(17, 17, 17); transform-origin: 100% 0px; transform: scaleX(1.0307);">0,00 €</div>
<div class="a" style="left:10px;top:638px;width:946px;height:102px;background:#fff;border:1px solid #c4c4c4;border-top:none;height:103px;"></div>
<div class="a" style="left:10px;top:638px;width:946px;height:25.5px;background:#416cb4;"></div>
<div class="t" style="left: 19.8px; top: 645.34px; font-size: 12px; color: rgb(255, 255, 255); transform-origin: 0px 0px; transform: scaleX(0.901);">ZEILENDATEN</div>
<div class="t" style="left: 104px; top: 645.34px; font-size: 12px; color: rgb(255, 255, 255); transform-origin: 0px 0px; transform: scaleX(0.9133);">(1)</div>
<div class="a" style="left:11px;top:663px;width:944px;height:33px;background:#efefef;"></div>
<div class="a" style="left:103px;top:664px;width:1.5px;height:32px;background:#c8c8c8;"></div>
<div class="a" style="left:198px;top:664px;width:1.5px;height:32px;background:#c8c8c8;"></div>
<div class="a" style="left:358px;top:664px;width:1.5px;height:32px;background:#c8c8c8;"></div>
<div class="a" style="left:473px;top:664px;width:1.5px;height:32px;background:#c8c8c8;"></div>
<div class="a" style="left:633px;top:664px;width:1.5px;height:32px;background:#c8c8c8;"></div>
<div class="a" style="left:793px;top:664px;width:1.5px;height:32px;background:#c8c8c8;"></div>
<div class="a" style="left:11px;top:696px;width:944px;height:26px;background:#fff;"></div>
<div class="a" style="left:199px;top:697px;width:159px;height:25px;background:#b4b4b4;"></div>
<div class="a" style="left:474px;top:697px;width:159px;height:25px;background:#b4b4b4;"></div>
<div class="a" style="left:103px;top:696px;width:1px;height:26px;background:#f0f0f0;"></div>
<div class="a" style="left:358px;top:696px;width:1px;height:26px;background:#f0f0f0;"></div>
<div class="a" style="left:633px;top:696px;width:1px;height:26px;background:#f0f0f0;"></div>
<div class="a" style="left:793px;top:696px;width:1px;height:26px;background:#f0f0f0;"></div>
<div class="t" style="left: 19.4px; top: 675.22px; font-size: 12.5px; color: rgb(17, 17, 17); transform-origin: 0px 0px; transform: scaleX(1.0385);">Art</div>
<div class="t" style="left: 111px; top: 675.22px; font-size: 12.5px; color: rgb(17, 17, 17); transform-origin: 0px 0px; transform: scaleX(1.0559);">Nummer</div>
<div class="t" style="left: 205.6px; top: 675.22px; font-size: 12.5px; color: rgb(17, 17, 17); transform-origin: 0px 0px; transform: scaleX(1.0374);">Kontobez.</div>
<div class="t" style="left: 366px; top: 675.22px; font-size: 12.5px; color: rgb(17, 17, 17); transform-origin: 0px 0px; transform: scaleX(1.0043);">Kostenstelle</div>
<div class="t" style="left: 481px; top: 675.22px; font-size: 12.5px; color: rgb(17, 17, 17); transform-origin: 0px 0px; transform: scaleX(0.9879);">KST-Name</div>
<div class="t" style="left: 640.8px; top: 675.22px; font-size: 12.5px; color: rgb(17, 17, 17); transform-origin: 0px 0px; transform: scaleX(1.0366);">Kostenträger</div>
<div class="t" style="left: 801px; top: 675.22px; font-size: 12.5px; color: rgb(17, 17, 17); transform-origin: 0px 0px; transform: scaleX(1.0271);">Buchungstext</div>
<div class="t" style="left: 20px; top: 703.42px; font-size: 12.5px; color: rgb(17, 17, 17); transform-origin: 0px 0px; transform: scaleX(1.0207);">Sachkonto</div>
<div class="t" style="left: 111.9px; top: 703.42px; font-size: 12.5px; color: rgb(17, 17, 17); transform-origin: 0px 0px; transform: scaleX(0.9852);">543101</div>
<div class="t" style="left: 206.9px; top: 703.42px; font-size: 12.5px; color: rgb(17, 17, 17); transform-origin: 0px 0px; transform: scaleX(1.0356);">Büromaterial</div>
<div class="t" style="left: 367px; top: 703.42px; font-size: 12.5px; color: rgb(17, 17, 17); transform-origin: 0px 0px; transform: scaleX(0.9781);">02.160.00.00</div>
<div class="t" style="left: 481.5px; top: 703.42px; font-size: 12.5px; color: rgb(17, 17, 17); transform-origin: 0px 0px; transform: scaleX(1.0075);">DV-Service</div>
<div class="t" style="left: 641.8px; top: 703.42px; font-size: 12.5px; color: rgb(17, 17, 17); transform-origin: 0px 0px; transform: scaleX(0.9747);">01.160.01</div>
<div class="t" style="left: 801.8px; top: 703.42px; font-size: 12.5px; color: rgb(17, 17, 17); transform-origin: 0px 0px; transform: scaleX(1.037);">Büromaterial</div>
<div class="a" style="left:11px;top:722px;width:944px;height:16px;background:#efefef;"></div>
<div class="a" style="left:46px;top:722px;width:341px;height:15px;background:#c6c6c6;"></div>
<div class="a" style="left:10px;top:751px;width:946px;height:24.5px;background:#416cb4;"></div>
<div class="t" style="left: 20.4px; top: 757.84px; font-size: 12px; color: rgb(255, 255, 255); transform-origin: 0px 0px; transform: scaleX(0.9097);">LUGM-ZEILEN</div>
<div class="t" style="left: 104.6px; top: 757.84px; font-size: 12px; color: rgb(255, 255, 255); transform-origin: 0px 0px; transform: scaleX(0.9133);">(0)</div>
<div class="a" style="left:10px;top:787px;width:946px;height:25.5px;background:#416cb4;"></div>
<div class="t" style="left: 20.4px; top: 794.34px; font-size: 12px; color: rgb(255, 255, 255); transform-origin: 0px 0px; transform: scaleX(0.8892);">FAKTURIERUNG</div>
<div class="a" style="left:10px;top:824px;width:946px;height:14px;background:#416cb4;"></div>
<div class="t" style="left: 20.4px; top: 831.34px; font-size: 12px; color: rgb(255, 255, 255); transform-origin: 0px 0px; transform: scaleX(0.9591);">ZAHLUNG</div>
<div class="a" style="left:966px;top:276px;width:17px;height:559px;background:#eeeeee;"></div>
<div class="a" style="left:967px;top:308px;width:15px;height:473.5px;background:#c8c8c8;"></div>
<div class="a" style="left:983px;top:274px;width:1px;height:563px;background:#c2c2c2;"></div>
<div class="a" style="left:996px;top:274px;width:1px;height:563px;background:#c2c2c2;"></div>
<svg style="left:0px;top:0px;" width="1000" height="861" viewBox="0 0 1000 861"><path d="M936 301.0 L941 292.5 L946 301.0 Z" fill="#fff"></path><circle cx="453.5" cy="333.0" r="4.3" stroke="#222" stroke-width="1.6" fill="none"></circle><path d="M456.6 336.1 L460.2 339.7" stroke="#222" stroke-width="2"></path><rect x="448.5" y="592.0" width="13" height="12.5" rx="2" fill="none" stroke="#333" stroke-width="1.3"></rect><path d="M451.5 590.0 V593.5 M458.5 590.0 V593.5" stroke="#333" stroke-width="1.3"></path><rect x="451.0" y="595.0" width="2" height="2" fill="#222"></rect><rect x="454.0" y="595.0" width="2" height="2" fill="#222"></rect><rect x="457.0" y="595.0" width="2" height="2" fill="#222"></rect><rect x="451.0" y="598.0" width="2" height="2" fill="#222"></rect><rect x="454.0" y="598.0" width="2" height="2" fill="#222"></rect><rect x="457.0" y="598.0" width="2" height="2" fill="#222"></rect><rect x="451.0" y="601.0" width="2" height="2" fill="#222"></rect><rect x="454.0" y="601.0" width="2" height="2" fill="#222"></rect><rect x="457.0" y="601.0" width="2" height="2" fill="#222"></rect><rect x="925.5" y="329.0" width="13" height="12.5" rx="2" fill="none" stroke="#333" stroke-width="1.3"></rect><path d="M928.5 327.0 V330.5 M935.5 327.0 V330.5" stroke="#333" stroke-width="1.3"></path><rect x="928.0" y="332.0" width="2" height="2" fill="#222"></rect><rect x="931.0" y="332.0" width="2" height="2" fill="#222"></rect><rect x="934.0" y="332.0" width="2" height="2" fill="#222"></rect><rect x="928.0" y="335.0" width="2" height="2" fill="#222"></rect><rect x="931.0" y="335.0" width="2" height="2" fill="#222"></rect><rect x="934.0" y="335.0" width="2" height="2" fill="#222"></rect><rect x="928.0" y="338.0" width="2" height="2" fill="#222"></rect><rect x="931.0" y="338.0" width="2" height="2" fill="#222"></rect><rect x="934.0" y="338.0" width="2" height="2" fill="#222"></rect><rect x="925.5" y="362.0" width="13" height="12.5" rx="2" fill="none" stroke="#333" stroke-width="1.3"></rect><path d="M928.5 360.0 V363.5 M935.5 360.0 V363.5" stroke="#333" stroke-width="1.3"></path><rect x="928.0" y="365.0" width="2" height="2" fill="#222"></rect><rect x="931.0" y="365.0" width="2" height="2" fill="#222"></rect><rect x="934.0" y="365.0" width="2" height="2" fill="#222"></rect><rect x="928.0" y="368.0" width="2" height="2" fill="#222"></rect><rect x="931.0" y="368.0" width="2" height="2" fill="#222"></rect><rect x="934.0" y="368.0" width="2" height="2" fill="#222"></rect><rect x="928.0" y="371.0" width="2" height="2" fill="#222"></rect><rect x="931.0" y="371.0" width="2" height="2" fill="#222"></rect><rect x="934.0" y="371.0" width="2" height="2" fill="#222"></rect><circle cx="930.5" cy="399.0" r="4.3" stroke="#222" stroke-width="1.6" fill="none"></circle><path d="M933.6 402.1 L937.2 405.7" stroke="#222" stroke-width="2"></path><circle cx="930.5" cy="432.0" r="4.3" stroke="#222" stroke-width="1.6" fill="none"></circle><path d="M933.6 435.1 L937.2 438.7" stroke="#222" stroke-width="2"></path><path d="M936 654.8 L941 646.3 L946 654.8 Z" fill="#fff"></path><path d="M89 680.5 L93.0 684.5 L97 680.5" stroke="#555" stroke-width="1.1" fill="none"></path><path d="M182 680.5 L186.0 684.5 L190 680.5" stroke="#555" stroke-width="1.1" fill="none"></path><path d="M343.5 680.5 L347.5 684.5 L351.5 680.5" stroke="#555" stroke-width="1.1" fill="none"></path><path d="M458.5 680.5 L462.5 684.5 L466.5 680.5" stroke="#555" stroke-width="1.1" fill="none"></path><path d="M618.5 680.5 L622.5 684.5 L626.5 680.5" stroke="#555" stroke-width="1.1" fill="none"></path><path d="M779 680.5 L783.0 684.5 L787 680.5" stroke="#555" stroke-width="1.1" fill="none"></path><path d="M546.5 684.5 L550 678.5 L553.5 684.5 Z" fill="#333"></path><path d="M940.5 705 L945.5 700.5 L950.5 705 M940.5 714 L945.5 718.5 L950.5 714" stroke="#aaa" stroke-width="1" fill="none"></path><path d="M36 725.5 L31 730.3 L36 735" stroke="#333" stroke-width="1.8" fill="none"></path><path d="M912 725.5 L917 730.3 L912 735" stroke="#333" stroke-width="1.8" fill="none"></path><path d="M936 758.5 L946 758.5 L941 767.0 Z" fill="#fff"></path><path d="M936 795 L946 795 L941 803.5 Z" fill="#fff"></path><path d="M936 832 L946 832 L941 840.5 Z" fill="#fff"></path><path d="M968.5 299 L974.5 292.5 L980.5 299" stroke="#333" stroke-width="2.1" fill="none"></path><path d="M968.7 812 L974.4 819 L980 812" stroke="#333" stroke-width="1.9" fill="none"></path><path d="M994 533 L986 537.8 L994 542.5 Z" fill="#555"></path><circle cx="990" cy="551.8" r="1.4" fill="#333"></circle><circle cx="990" cy="557.5" r="1.4" fill="#333"></circle><circle cx="990" cy="563.3" r="1.4" fill="#333"></circle><path d="M986 575 L994 579.5 L986 584 Z" fill="#555"></path></svg>
<div class="a" style="left:1007px;top:284px;width:566px;height:26px;background:#416cb4;"></div>
<div class="t" style="left: 1017px; top: 291.84px; font-size: 12px; color: rgb(255, 255, 255); transform-origin: 0px 0px; transform: scaleX(0.9222);">VORSCHAU: HAUPTDOKUMENT</div>
<div class="a" style="left:1008px;top:311px;width:565px;height:526px;background:#3e3e3e;"></div>
<div class="a" style="left:1008px;top:311px;width:565px;height:32px;background:#494949;border-top:1px solid #3a3a3a;border-bottom:1px solid #2e2e2e;"></div>
<div class="a" style="left:1076px;top:318px;width:1px;height:18px;background:#333;"></div>
<div class="t" style="left: 1112.5px; top: 321.34px; font-size: 12px; color: rgb(232, 232, 232); transform-origin: 0px 0px; transform: scaleX(0.945);">Seite:</div>
<div class="a" style="left:1152px;top:315.5px;width:52px;height:23px;background:#555555;border:1px solid #393939;border-radius:2px;"></div>
<div class="t" style="left: 1190.31px; top: 321.34px; font-size: 12px; color: rgb(240, 240, 240); transform-origin: 100% 0px; transform: scaleX(0.8972);">1</div>
<div class="t" style="left: 1207px; top: 321.34px; font-size: 12px; color: rgb(232, 232, 232); transform-origin: 0px 0px; transform: scaleX(0.9878);">von 1</div>
<div class="a" style="left:1279px;top:315px;width:30px;height:24px;background:#434343;border:1px solid #383838;border-radius:2px;"></div>
<div class="a" style="left:1309px;top:318px;width:1px;height:18px;background:#3a3a3a;"></div>
<div class="a" style="left:1344px;top:315px;width:146px;height:24px;background:#474747;border:1px solid #363636;border-radius:2px;"></div>
<div class="t" style="left: 1347.5px; top: 321.84px; font-size: 12px; color: rgb(240, 240, 240); transform-origin: 0px 0px; transform: scaleX(0.9404);">60%</div>
<div class="a" style="left:1051.5px;top:352.5px;width:476.5px;height:485px;background:#fff;"></div>
<div class="t" style="left: 1402.77px; top: 468.11px; font-size: 17px; color: rgb(92, 92, 92); font-weight: bold; transform-origin: 100% 0px; transform: scaleX(0.9396);">RECHNUNG</div>
<div class="t" style="left: 1078.5px; top: 489.25px; font-size: 7.5px; color: rgb(17, 17, 17); font-weight: bold; font-style: italic; -webkit-text-stroke: 0.35px rgb(17, 17, 17); transform-origin: 0px 0px; transform: scaleX(1.0474);"><u>EDV Zubehör Maus - Tannenplatz 5 - 35500 Unserestadt</u></div>
<div class="t" style="left: 1078.3px; top: 511.65px; font-size: 7.5px; color: rgb(17, 17, 17); -webkit-text-stroke: 0.35px rgb(17, 17, 17); transform-origin: 0px 0px; transform: scaleX(1.106);">Stadtverwaltung</div>
<div class="t" style="left: 1078.3px; top: 521.65px; font-size: 7.5px; color: rgb(17, 17, 17); -webkit-text-stroke: 0.35px rgb(17, 17, 17); transform-origin: 0px 0px; transform: scaleX(1.1005);">Unserestadt</div>
<div class="t" style="left: 1078.3px; top: 532.05px; font-size: 7.5px; color: rgb(17, 17, 17); -webkit-text-stroke: 0.35px rgb(17, 17, 17); transform-origin: 0px 0px; transform: scaleX(1.0353);">Unsere Strasse 3</div>
<div class="t" style="left: 1078.3px; top: 554.65px; font-size: 7.5px; color: rgb(17, 17, 17); -webkit-text-stroke: 0.35px rgb(17, 17, 17); transform-origin: 0px 0px; transform: scaleX(1.0727);">35500 Unserestadt</div>
<div class="t" style="left: 1451.04px; top: 498.77px; font-size: 7px; color: rgb(17, 17, 17); -webkit-text-stroke: 0.35px rgb(17, 17, 17); transform-origin: 100% 0px; transform: scaleX(0.9612);">EDV ZUBEHÖR</div>
<div class="t" style="left: 1445.58px; top: 509.07px; font-size: 7px; color: rgb(17, 17, 17); -webkit-text-stroke: 0.35px rgb(17, 17, 17); transform-origin: 100% 0px; transform: scaleX(0.9926);">HEINRICH MAUS</div>
<div class="t" style="left: 1446.22px; top: 520.07px; font-size: 7px; color: rgb(17, 17, 17); -webkit-text-stroke: 0.35px rgb(17, 17, 17); transform-origin: 100% 0px; transform: scaleX(1.0041);">TANNENPLATZ 5</div>
<div class="t" style="left: 1428.58px; top: 531.07px; font-size: 7px; color: rgb(17, 17, 17); -webkit-text-stroke: 0.35px rgb(17, 17, 17); transform-origin: 100% 0px; transform: scaleX(0.9861);">35500 UNSERESTADT</div>
<div class="t" style="left: 1418.71px; top: 551.87px; font-size: 7px; color: rgb(17, 17, 17); -webkit-text-stroke: 0.35px rgb(17, 17, 17); transform-origin: 100% 0px; transform: scaleX(1.0375);">TELEFON: 07332/ 937130</div>
<div class="t" style="left: 1420.26px; top: 562.82px; font-size: 7px; color: rgb(17, 17, 17); -webkit-text-stroke: 0.35px rgb(17, 17, 17); transform-origin: 100% 0px; transform: scaleX(1.04);">TELEFAX: 07332/ 937140</div>
<div class="t" style="left: 1420.02px; top: 573.77px; font-size: 7px; color: rgb(17, 17, 17); -webkit-text-stroke: 0.35px rgb(17, 17, 17); transform-origin: 100% 0px; transform: scaleX(0.9684);">BANK: SPARKASSE ULM</div>
<div class="t" style="left: 1413.04px; top: 584.67px; font-size: 7px; color: rgb(17, 17, 17); -webkit-text-stroke: 0.35px rgb(17, 17, 17); transform-origin: 100% 0px; transform: scaleX(0.9665);">BIC/SWIFT PBNKDEFFXXX</div>
<div class="t" style="left: 1395.72px; top: 595.07px; font-size: 7px; color: rgb(17, 17, 17); -webkit-text-stroke: 0.35px rgb(17, 17, 17); transform-origin: 100% 0px; transform: scaleX(1.0579);">IBAN DE18100100100004545454</div>
<div class="t" style="left: 1078.3px; top: 621.15px; font-size: 7.5px; color: rgb(17, 17, 17); font-weight: bold; -webkit-text-stroke: 0.35px rgb(17, 17, 17); transform-origin: 0px 0px; transform: scaleX(1.0049);">RECHNUNGSDATEN:</div>
<div class="t" style="left: 1294.4px; top: 621.15px; font-size: 7.5px; color: rgb(17, 17, 17); font-weight: bold; -webkit-text-stroke: 0.35px rgb(17, 17, 17); transform-origin: 0px 0px; transform: scaleX(0.9459);">BESTELLDATEN:</div>
<div class="t" style="left: 1078.3px; top: 633.35px; font-size: 7.5px; color: rgb(17, 17, 17); -webkit-text-stroke: 0.35px rgb(17, 17, 17); transform-origin: 0px 0px; transform: scaleX(1.0704);">Rechnungsnummer:</div>
<div class="t" style="left: 1078.3px; top: 644.25px; font-size: 7.5px; color: rgb(17, 17, 17); -webkit-text-stroke: 0.35px rgb(17, 17, 17); transform-origin: 0px 0px; transform: scaleX(1.0956);">Datum:</div>
<div class="t" style="left: 1078.3px; top: 655.25px; font-size: 7.5px; color: rgb(17, 17, 17); -webkit-text-stroke: 0.35px rgb(17, 17, 17); transform-origin: 0px 0px; transform: scaleX(1.1);">Kundennummer:</div>
<div class="t" style="left: 1160px; top: 633.35px; font-size: 7.5px; color: rgb(17, 17, 17); -webkit-text-stroke: 0.35px rgb(17, 17, 17); transform-origin: 0px 0px; transform: scaleX(1.0627);">699785</div>
<div class="t" style="left: 1160px; top: 644.25px; font-size: 7.5px; color: rgb(17, 17, 17); -webkit-text-stroke: 0.35px rgb(17, 17, 17); transform-origin: 0px 0px; transform: scaleX(1.0653);">15.01.2016</div>
<div class="t" style="left: 1160px; top: 655.25px; font-size: 7.5px; color: rgb(17, 17, 17); -webkit-text-stroke: 0.35px rgb(17, 17, 17); transform-origin: 0px 0px; transform: scaleX(1.0831);">10011</div>
<div class="t" style="left: 1294.4px; top: 633.35px; font-size: 7.5px; color: rgb(17, 17, 17); -webkit-text-stroke: 0.35px rgb(17, 17, 17); transform-origin: 0px 0px; transform: scaleX(1.0862);">Bestellnummer:</div>
<div class="t" style="left: 1294.4px; top: 644.25px; font-size: 7.5px; color: rgb(17, 17, 17); -webkit-text-stroke: 0.35px rgb(17, 17, 17); transform-origin: 0px 0px; transform: scaleX(1.0846);">Bestelldatum:</div>
<div class="t" style="left: 1294.4px; top: 655.25px; font-size: 7.5px; color: rgb(17, 17, 17); -webkit-text-stroke: 0.35px rgb(17, 17, 17); transform-origin: 0px 0px; transform: scaleX(1.0503);">Ihr Zeichen:</div>
<div class="t" style="left: 1358.8px; top: 633.35px; font-size: 7.5px; color: rgb(17, 17, 17); -webkit-text-stroke: 0.35px rgb(17, 17, 17); transform-origin: 0px 0px; transform: scaleX(1.0876);">telefonisch</div>
<div class="t" style="left: 1358.8px; top: 644.25px; font-size: 7.5px; color: rgb(17, 17, 17); -webkit-text-stroke: 0.35px rgb(17, 17, 17); transform-origin: 0px 0px; transform: scaleX(1.0547);">13.01.2016</div>
<div class="t" style="left: 1358.8px; top: 655.25px; font-size: 7.5px; color: rgb(17, 17, 17); -webkit-text-stroke: 0.35px rgb(17, 17, 17); transform-origin: 0px 0px; transform: scaleX(1.1023);">Herr Otto</div>
<div class="t" style="left: 1078.3px; top: 679.65px; font-size: 7.5px; color: rgb(17, 17, 17); font-weight: bold; -webkit-text-stroke: 0.35px rgb(17, 17, 17); transform-origin: 0px 0px; transform: scaleX(1.0116);">ANMERKUNGEN ODER BESONDERE ANWEISUNGEN:</div>
<div class="t" style="left: 1081.7px; top: 729.5px; font-size: 6.5px; color: rgb(17, 17, 17); -webkit-text-stroke: 0.45px rgb(17, 17, 17); transform-origin: 0px 0px; transform: scaleX(1.0904);">MENGE</div>
<div class="t" style="left: 1225.7px; top: 729.5px; font-size: 6.5px; color: rgb(17, 17, 17); -webkit-text-stroke: 0.45px rgb(17, 17, 17); transform-origin: 0px 0px; transform: scaleX(1.0305);">BESCHREIBUNG</div>
<div class="t" style="left: 1399.3px; top: 729.5px; font-size: 6.5px; color: rgb(17, 17, 17); -webkit-text-stroke: 0.45px rgb(17, 17, 17); transform-origin: 0px 0px; transform: scaleX(1.0109);">STÜCKPREIS</div>
<div class="t" style="left: 1463.8px; top: 729.5px; font-size: 6.5px; color: rgb(17, 17, 17); -webkit-text-stroke: 0.45px rgb(17, 17, 17); transform-origin: 0px 0px; transform: scaleX(1.1321);">SUMME</div>
<div class="t" style="left: 1079.5px; top: 743.65px; font-size: 7.5px; color: rgb(17, 17, 17); -webkit-text-stroke: 0.35px rgb(17, 17, 17); transform-origin: 0px 0px; transform: scaleX(1.0187);">10</div>
<div class="t" style="left: 1123.7px; top: 743.65px; font-size: 7.5px; color: rgb(17, 17, 17); -webkit-text-stroke: 0.35px rgb(17, 17, 17); transform-origin: 0px 0px; transform: scaleX(1.0907);">Mousepads</div>
<div class="t" style="left: 1426.39px; top: 743.65px; font-size: 7.5px; color: rgb(17, 17, 17); -webkit-text-stroke: 0.35px rgb(17, 17, 17); transform-origin: 100% 0px; transform: scaleX(1.061);">6,99</div>
<div class="t" style="left: 1478.42px; top: 743.65px; font-size: 7.5px; color: rgb(17, 17, 17); -webkit-text-stroke: 0.35px rgb(17, 17, 17); transform-origin: 100% 0px; transform: scaleX(1.0915);">69,90</div>
<div class="t" style="left: 1079.5px; top: 759.35px; font-size: 7.5px; color: rgb(17, 17, 17); -webkit-text-stroke: 0.35px rgb(17, 17, 17); transform-origin: 0px 0px; transform: scaleX(0.839);">1</div>
<div class="t" style="left: 1123.7px; top: 759.35px; font-size: 7.5px; color: rgb(17, 17, 17); -webkit-text-stroke: 0.35px rgb(17, 17, 17); transform-origin: 0px 0px; transform: scaleX(1.1095);">Toner für HP Laserjet 2100</div>
<div class="t" style="left: 1422.22px; top: 759.35px; font-size: 7.5px; color: rgb(17, 17, 17); -webkit-text-stroke: 0.35px rgb(17, 17, 17); transform-origin: 100% 0px; transform: scaleX(1.0915);">58,00</div>
<div class="t" style="left: 1478.42px; top: 759.35px; font-size: 7.5px; color: rgb(17, 17, 17); -webkit-text-stroke: 0.35px rgb(17, 17, 17); transform-origin: 100% 0px; transform: scaleX(1.0915);">58,00</div>
<div class="t" style="left: 1381.74px; top: 776.4px; font-size: 6.5px; color: rgb(17, 17, 17); -webkit-text-stroke: 0.45px rgb(17, 17, 17); transform-origin: 100% 0px; transform: scaleX(1.0636);">ZWISCHENSUMME</div>
<div class="t" style="left: 1474.25px; top: 775.55px; font-size: 7.5px; color: rgb(17, 17, 17); -webkit-text-stroke: 0.35px rgb(17, 17, 17); transform-origin: 100% 0px; transform: scaleX(1.0674);">107,48</div>
<div class="t" style="left: 1373.18px; top: 791.4px; font-size: 6.5px; color: rgb(17, 17, 17); -webkit-text-stroke: 0.45px rgb(17, 17, 17); transform-origin: 100% 0px; transform: scaleX(1.0397);">UMSATZSTEUER 19%</div>
<div class="t" style="left: 1478.42px; top: 790.55px; font-size: 7.5px; color: rgb(17, 17, 17); -webkit-text-stroke: 0.35px rgb(17, 17, 17); transform-origin: 100% 0px; transform: scaleX(1.0915);">20,42</div>
<div class="t" style="left: 1380.63px; top: 807.5px; font-size: 6.5px; color: rgb(17, 17, 17); -webkit-text-stroke: 0.45px rgb(17, 17, 17); transform-origin: 100% 0px; transform: scaleX(1.0005);">FÄLLIGER BETRAG</div>
<div class="t" style="left: 1474.25px; top: 806.65px; font-size: 7.5px; color: rgb(17, 17, 17); -webkit-text-stroke: 0.35px rgb(17, 17, 17); transform-origin: 100% 0px; transform: scaleX(1.0674);">127,90</div>
<div class="t" style="left: 1078.7px; top: 824.25px; font-size: 7.5px; color: rgb(17, 17, 17); -webkit-text-stroke: 0.35px rgb(17, 17, 17); transform-origin: 0px 0px; transform: scaleX(1.1102);">Das Rechnungsdatum entspricht dem Lieferdatum</div>
<div class="a" style="left:1583px;top:276px;width:17px;height:561px;background:#eeeeee;"></div>
<div class="a" style="left:1584px;top:308px;width:15px;height:205.5px;background:#c8c8c8;"></div>
<div class="a" style="left:0px;top:837px;width:1600px;height:23px;background:#fff;border-top:1px solid #a9a9a9;border-right:1px solid #b9b9b9;"></div>
<div class="a" style="left:0px;top:859px;width:1600px;height:2px;background:#2f2f2f;"></div>
<div class="t" style="left: 1527px; top: 842.04px; font-size: 12px; color: rgb(17, 17, 17); transform-origin: 0px 0px; transform: scaleX(0.8794);">100%</div>
<svg style="left:0px;top:0px;" width="1600" height="861" viewBox="0 0 1600 861"><path d="M1511 293.2 Q1514 290.3 1516.8 291.2 Q1519.2 292.6 1518.6 295.6 Q1517.6 298.6 1513.6 301.4" stroke="#fff" stroke-width="2" fill="none" stroke-linecap="round"></path><path d="M1507.6 290.6 L1507.9 297.2 L1513.4 295.6 Z" fill="#fff"></path><rect x="1531" y="292.5" width="7.5" height="7" rx="1" fill="none" stroke="#d2e5f8" stroke-width="1.4"></rect><rect x="1534.5" y="295.3" width="7.5" height="7" rx="1" fill="none" stroke="#d2e5f8" stroke-width="1.4"></rect><path d="M1553 300.8 L1557.9 292.8 L1562.8 300.8 Z" fill="#fff"></path><rect x="1020.5" y="320.5" width="13" height="12.5" fill="#2e2e2e" stroke="#fff" stroke-width="1.7"></rect><rect x="1021.5" y="321.5" width="3.2" height="10.5" fill="#8a8a8a"></rect><path d="M1025.4 320.5 V333" stroke="#fff" stroke-width="1.3"></path><path d="M1061 322 L1054 328.5 H1058 V333.5 H1064 V328.5 H1068 Z" fill="#9a9a9a"></path><path d="M1092 333.5 L1085 327 H1089 V322 H1095 V327 H1099 Z" fill="#9a9a9a"></path><path d="M1288.5 327 H1299" stroke="#fff" stroke-width="2"></path><path d="M1319.5 327 H1330.5 M1325 321.5 V332.5" stroke="#fff" stroke-width="2"></path><path d="M1476 325.5 L1479 322 L1482 325.5 Z M1476 328.5 L1479 332 L1482 328.5 Z" fill="#ddd"></path><path d="M1545.5 322.5 L1550.5 327.2 L1545.5 332 M1551.5 322.5 L1556.5 327.2 L1551.5 332" stroke="#fff" stroke-width="2.2" fill="none"></path><defs><pattern id="dots" width="3" height="3" patternUnits="userSpaceOnUse"><rect width="3" height="3" fill="#4f4f4f"></rect><circle cx="1.5" cy="1.5" r="0.7" fill="#9a9a9a"></circle></pattern><pattern id="dots2" width="2.5" height="2.5" patternUnits="userSpaceOnUse"><rect width="2.5" height="2.5" fill="#7d7d7d"></rect><circle cx="1.25" cy="1.25" r="0.6" fill="#b0b0b0"></circle></pattern></defs><rect x="1082" y="381.5" width="148" height="68.5" fill="url(#dots2)"></rect><path d="M1082 450 V381.5 H1230" stroke="#333" stroke-width="2" fill="none"></path><path d="M1289 381.5 H1500.5 V401 H1317.5 Z" fill="#f4f4f4"></path><path d="M1289.0 382.30 H1500.5" stroke="#3a3a3a" stroke-width="2.5"></path><path d="M1294.6 386.05 H1500.5" stroke="#3a3a3a" stroke-width="2.5"></path><path d="M1300.2 389.80 H1500.5" stroke="#3a3a3a" stroke-width="2.5"></path><path d="M1305.8 393.55 H1500.5" stroke="#3a3a3a" stroke-width="2.5"></path><path d="M1311.4 397.30 H1500.5" stroke="#3a3a3a" stroke-width="2.5"></path><path d="M1229 382 H1289 L1317.5 401 H1500.5 V433.5 H1424.5 L1399 449.5 H1229 Z" fill="url(#dots)"></path><path d="M1229 382 V450" stroke="#444" stroke-width="2"></path><path d="M1099 405.5 H1219 Q1224 405.5 1223 409.5 L1219.5 425 Q1218.5 429 1214 429 H1093 Q1088.5 429 1089.5 425 L1093 409.5 Q1094 405.5 1099 405.5 Z" fill="none" stroke="#fff" stroke-width="2.2"></path><text x="1102" y="422.8" font-size="22" font-weight="bold" font-style="italic" fill="#fff" stroke="#fff" stroke-width="1" textLength="106" lengthAdjust="spacingAndGlyphs" letter-spacing="2">maus</text><circle cx="1221.5" cy="399.5" r="2.6" fill="none" stroke="#fff" stroke-width="0.9"></circle><path d="M1354 441 L1378 406 M1358 443 L1381 409" stroke="#e6e6e6" stroke-width="1.6" fill="none"></path><path d="M1352 438 L1359 445 L1362 441 L1356 434 Z" fill="#ddd"></path><path d="M1376 396 L1385 390 L1389 399 L1396 410 L1392 413 L1380 406 Z" fill="none" stroke="#e8e8e8" stroke-width="1.6"></path><path d="M1391 412 Q1405 418 1410 437 L1418 443" stroke="#e0e0e0" stroke-width="1.3" fill="none"></path><path d="M1387 425 L1385 438 M1399 428 L1406 436" stroke="#eee" stroke-width="2.4"></path><ellipse cx="1419" cy="440.5" rx="3.5" ry="2" fill="#ddd"></ellipse><path d="M1074 724 H1506" stroke="#222" stroke-width="2"></path><rect x="1074" y="724" width="432" height="47" fill="none" stroke="#555" stroke-width="1"></rect><path d="M1074 740 H1506 M1074 755.6 H1506 M1114.4 724 V771 M1391 724 V771 M1449.2 724 V818.2" stroke="#666" stroke-width="0.9"></path><path d="M1449.2 786.7 H1506 M1449.2 802.5 H1506 M1449.2 818.2 H1506 M1506 771 V818.2" stroke="#666" stroke-width="0.9"></path><path d="M1586 299 L1591.5 292 L1597 299" stroke="#333" stroke-width="1.9" fill="none"></path><path d="M1586 812 L1591.5 819.5 L1597 812" stroke="#333" stroke-width="1.9" fill="none"></path><circle cx="1516" cy="846" r="4.3" fill="#c8dcf4" stroke="#2a4f8a" stroke-width="1.4"></circle><path d="M1513.5 846 H1518.5 M1516 843.5 V848.5" stroke="#1e5cb0" stroke-width="1.4"></path><path d="M1519 849 L1523 853" stroke="#333" stroke-width="2"></path><path d="M1570.5 846.5 L1577.5 846.5 L1574 851 Z" fill="#222"></path><rect x="1596" y="851" width="1.3" height="1.3" fill="#999"></rect><rect x="1593" y="854" width="1.3" height="1.3" fill="#999"></rect><rect x="1596" y="854" width="1.3" height="1.3" fill="#999"></rect><rect x="1590" y="857" width="1.3" height="1.3" fill="#999"></rect><rect x="1593" y="857" width="1.3" height="1.3" fill="#999"></rect><rect x="1596" y="857" width="1.3" height="1.3" fill="#999"></rect></svg>
</body></html>
